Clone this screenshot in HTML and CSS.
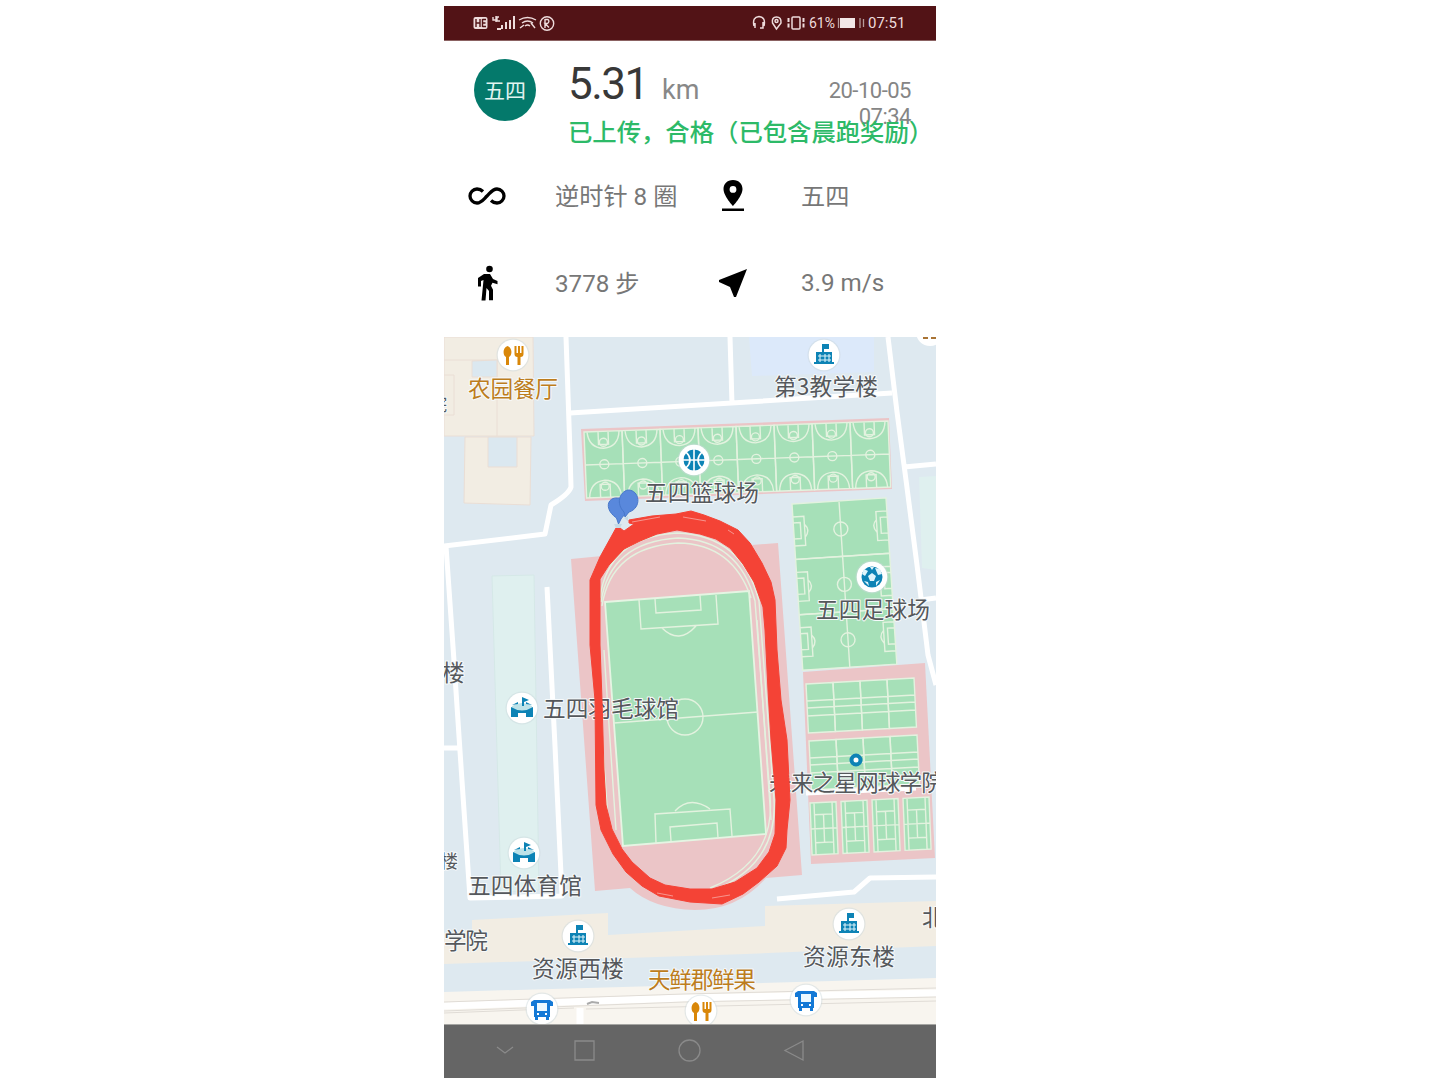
FILE: index.html
```html
<!DOCTYPE html>
<html lang="zh-CN">
<head>
<meta charset="utf-8">
<title>跑步记录</title>
<link rel="stylesheet" href="styles.css">
</head>
<body>
<main class="phone">
  <header class="status">
    <svg class="status-left" width="84" height="18" viewBox="472 14 84 18" fill="none" stroke="#eedcdc" stroke-width="1.4">
      <rect x="473.5" y="17" width="14" height="12" rx="2" fill="#eedcdc" stroke="none"/>
      <path d="M476 19v8M480 19v8M476 23h4M482.5 19v8M482.5 19.500h3.500M482.500 23h3M482.500 26.500h3.500" stroke="#521316"/>
      <path d="M493 17v3h3M496 16v6M499 17h-2v4h3"/>
      <path d="M502 29v-4M506 29v-7M510 29v-9M514 29V16M497 29h4" stroke-width="2"/>
      <path d="M519 20q8.500-5 17 0M522 23q5.500-4 11 0M525 26q2.500-2 5 0M520 28l4-3M531 23l4 5"/>
      <circle cx="547" cy="23.500" r="6.700"/><path d="M545 19v9M545 19.500h3q2 2-.5 4h-2.500l4 4"/>
    </svg>
    <div class="status-right">
      <svg width="54" height="18" viewBox="748 14 54 18" fill="none" stroke="#eedcdc" stroke-width="1.500">
        <path d="M751 26q-2-9 5-9.500q7 .5 5 9.500M752 23v5M760 22v6h-3"/>
        <path d="M773.500 29l-4-6q-1-6 4-6t4.500 6z"/><circle cx="773.500" cy="21" r="1.500"/>
        <rect x="789" y="17" width="8" height="12" rx="1"/><path d="M785.500 18v10M800.500 18v10" stroke-width="2" stroke-dasharray="4 1.500"/>
      </svg>
      <span class="battery-text">61%</span>
      <svg width="28" height="14" viewBox="0 0 28 14"><path d="M1.500 2v10M23 2v10M26.500 3v8" stroke="#b79b9b" stroke-width="1.300"/><path d="M3 2h15v10H3z" fill="#f2e6e6"/></svg>
      <span class="clock">07:51</span>
    </div>
  </header>

  <section class="summary">
    <div class="avatar">五四</div>
    <div class="result">
      <div class="headline">
        <div class="distance"><b>5.31</b><span>km</span></div>
        <time class="date">20-10-05<br>07:34</time>
      </div>
      <p class="state">已上传，合格（已包含晨跑奖励）</p>
    </div>
  </section>

  <section class="metrics">
    <div class="metric"><svg class="wide" viewBox="0 0 38 18"><path d="M15 4.500Q12.500 2 9 2a7 7 0 0 0 0 14c4 0 6-3 10-7s6-7 10-7a7 7 0 0 1 0 14q-3.500 0-6-2.500" fill="none" stroke="#000" stroke-width="3.300"/></svg><span>逆时针 8 圈</span></div>
    <div class="metric"><svg viewBox="0 0 24 32"><path d="M12 0C6 0 2.500 4 2.500 9c0 7 9.500 17 9.500 17s9.500-10 9.500-17c0-5-3.500-9-9.500-9zm0 6a3.400 3.400 0 1 1 0 6.800A3.400 3.400 0 0 1 12 6zM1 28.500h22v2.500H1z" fill-rule="evenodd"/></svg><span>五四</span></div>
    <div class="metric"><svg class="walk" viewBox="0 0 24 36"><circle cx="14.500" cy="4" r="3.300"/><path d="M9 9h6l3 5 4.500 2v3.200l-5-1.500-1.500 3 2 4v10.500h-4V26l-2.500-3-1 12.500H6.500L8.500 15 6 16v5.500H3V13z"/></svg><span>3778 步</span></div>
    <div class="metric"><svg class="arrow" viewBox="0 0 28 28"><path d="M28 0L17 28h-2l-4-10L0 13v-2z"/></svg><span class="latin">3.9 m/s</span></div>
  </section>

  <svg class="map" width="492" height="687" viewBox="444 337 492 687">
    <defs>
      <g id="hoops" class="chalk">
        <path d="M0 0h38v66H0zM0 33h38M3 0q1 16 16 17Q34 16 35 0M3 66q1-16 16-17q15 1 16 17M14 0v13h10V0M14 66V53h10v13"/>
        <circle cx="19" cy="33" r="4.500"/><circle cx="19" cy="11" r="4"/><circle cx="19" cy="55" r="4"/>
      </g>
      <g id="soccer" class="chalk">
        <path d="M0 0h94v55.400H0zM47 0v55.400M0 13h11v29H0M0 19h7v16H0M94 13H83v29h11M94 19h-7v16h7M11 21q6 6 0 13M83 21q-6 6 0 13"/>
        <circle cx="47" cy="28" r="7"/>
      </g>
      <g id="tennis" class="chalk"><path d="M0 0h27v49H0zM0 17h27M0 24h27M0 32h27"/></g>
      <g id="tall-tennis"><path d="M0 0h26v52H0z" fill="#a6e0b8"/><g class="chalk"><path d="M0 0h26v52H0zM4 0v52M22 0v52M4 12h18M4 40h18M13 12v28M0 26h26"/></g></g>
      <g id="pin"><circle r="16.500" fill="#c9d6dc" opacity=".45"/><circle r="15.300" fill="#fff"/></g>
      <g id="school"><use href="#pin"/><path d="M-10 9V7h2V-3h6v-8h7v5h-5v3h8V7h2v2z" fill="#0d83b5"/><path d="M-6 1H7M-6 5H7M-4-1V7M1-1V7M5-1V7" stroke="#d9f1f7" stroke-width="1.100"/></g>
      <g id="stadium"><use href="#pin"/><path d="M-10-2q10-6 20 0v3q-10 5-20 0z" fill="#bde2e8"/><path d="M0-11l7 3-5 2v4H0zM-11-1q11 7 22 0V9H4V5h-8v4h-7zM-10-3l6-3v2zM10-3L4-6v2z" fill="#0d83b5"/></g>
      <g id="food"><use href="#pin"/><path d="M-5.500-9c-5.500 2-4.500 10-1.500 11v8h3V2c3-1 4-9-1.500-11zM1.500-9v8q0 3 3 3v8h3V2q3 0 3-3v-8h-2v7h-1.500v-7h-2v7H3.500v-7z" fill="#d98709"/></g>
      <g id="bus"><use href="#pin"/><path d="M-8-9H8l3 2v4H8V8h-1v3H4V8h-8v3h-3V8h-1V-3h-3v-4z" fill="#1479d6"/><path d="M-5-6H5V2H-5z" fill="#edf9ff"/><path d="M-5 5h2M3 5h2" stroke="#fff" stroke-width="2"/></g>
    </defs>

    <path d="M444 337h492v687H444z" fill="#dee9f0"/>
    <!-- buildings -->
    <g fill="#f2ede3" stroke="#eaded5">
      <path d="M444 337h89l1 99h-90z"/><path d="M465 437h66l-1 68-66-2z"/>
      <path d="M444 360h54M497 360v76M444 375h10v40h-10" fill="none"/>
      <path d="M472 361l25-1v17h-25zM488 437h29v30h-29z" fill="#dbe8f0"/>
      <path d="M444 933l28-2v-11l136-7v22l122-7 35-2V906l171-5v45l-190 8-302 10z" stroke="none"/>
    </g>
    <path d="M749 337h125v35l-122 4z" fill="#dce9fa"/>
    <path d="M492 576l42-1 5 315-38 2z" fill="#dff0ef" stroke="#d5e8e7"/>
    <path d="M919 477l17-1v94l-14-2z" fill="#dff0ef"/>
    <path d="M444 992l492-14v46H444z" fill="#f8f5ef"/>

    <!-- roads -->
    <g fill="none" stroke="#fff" stroke-width="5" stroke-linejoin="round">
      <path d="M566 337l4 115 1 35q-2 7-20 18l-6 29-101 12M570 413l322-20M730 337l2 67M888 337l9 75 9 68 11 85 11 90 8 30M904 467l32-3M920 600l16-2"/>
      <path d="M446 546l8 115 8 120 8 117 92-2-7-150-8-159M444 748h18"/>
      <path d="M777 899l77-7 16-14 66-1"/>
      <path d="M444 1006l240-8 252-5M580 1008v16" stroke-width="7"/>
    </g>
    <path d="M444 1002l240-8 252-6M444 1011l240-9 252-5M444 1013l130-5M586 1009l350-8" fill="none" stroke="#e0dcd6"/>
    <path d="M587 1004l5-2 7 1" fill="none" stroke="#aaa" stroke-width="2"/>

    <!-- basketball courts -->
    <path d="M581 429l308-11 3 71-307 12z" fill="#ebc5c7"/>
    <g transform="matrix(1 -.036 .04 1 584 432)">
      <path d="M0 0h304v66H0z" fill="#a6e0b8"/>
      <use href="#hoops"/><use href="#hoops" x="38"/><use href="#hoops" x="76"/><use href="#hoops" x="114"/><use href="#hoops" x="152"/><use href="#hoops" x="190"/><use href="#hoops" x="228"/><use href="#hoops" x="266"/>
    </g>

    <!-- football pitches -->
    <g transform="matrix(1 -.065 .065 1 792 504)">
      <path d="M0 0h94v166H0z" fill="#a6e0b8"/>
      <use href="#soccer"/><use href="#soccer" y="55.400"/><use href="#soccer" y="110.800"/>
    </g>

    <!-- tennis courts -->
    <path d="M803 672l122-9 10 195-124 6z" fill="#ebc5c7"/>
    <g transform="matrix(1 -.055 .05 1 806 684)"><path d="M0 0h108v49H0z" fill="#a6e0b8"/><use href="#tennis"/><use href="#tennis" x="27"/><use href="#tennis" x="54"/><use href="#tennis" x="81"/></g>
    <g transform="matrix(1 -.055 .05 1 809 741)"><path d="M0 0h108v49H0z" fill="#a6e0b8"/><use href="#tennis"/><use href="#tennis" x="27"/><use href="#tennis" x="54"/><use href="#tennis" x="81"/></g>
    <path d="M806 793l110-5" stroke="#fff" stroke-width="5"/>
    <g transform="matrix(1 -.05 .04 1 810 803)"><use href="#tall-tennis"/><use href="#tall-tennis" x="31"/><use href="#tall-tennis" x="62"/><use href="#tall-tennis" x="93"/></g>

    <!-- running track -->
    <path d="M571 559l31-3q20-29 76-31 54 1 74 20l26-2 24 332-36 3q-28 32-71 32-42-1-65-22l-35 3z" fill="#ebc5c7"/>
    <path d="M605 602l144-11 17 243-143 12z" fill="#a6e0b8" stroke="#e5f5e3" stroke-width="1.800"/>
    <g class="chalk">
      <path d="M614 723l144-11M639 600l2 29 77-5-2-29M655 599l1 14 45-3-1-15M662 628q17 17 34-2"/>
      <circle cx="685" cy="717" r="18"/>
      <path d="M656 843l-1-29 75-5 2 27M671 841l-1-14 47-4 1 15M675 811q15-16 35-2"/>
      <path d="M600 598q8-61 77-65 65 2 82 68l15 198q4 66-62 92"/>
      <path d="M601 602q9-60 77-64 61 2 77 63l15 195q6 65-60 92"/>
      <path d="M602 606q9-59 76-63 55 1 73 55M597 600l4 120 7 100 12 28M604 650l12 180M757 620l14 200"/>
    </g>

    <!-- place labels below the route -->
    <g class="label">
      <text x="543" y="717" textLength="136">五四羽毛球馆</text>
      <text x="769" y="791" textLength="175">未来之星网球学院</text>
    </g>

    <!-- recorded route -->
    <path fill="#f44336" stroke="#f44336" stroke-linejoin="round" fill-rule="evenodd" d="M616 528L620 528 624 531 634 524 629 523 629 520 652 516 676 514 691 511 704 515 720 521 738 530 750 543 762 563 771 582 775 600 777 650 781 700 787 740 790 800 787 830 786 848 777 866 759 882 743 894 722 904 690 902 659 896 642 886 626 872 613 854 601 830 596 805 595 700 590 645 590 580 600 557ZM640 541L624 549 609 565 600 579 600 645 602 700 604 770 606 805 612 829 622 849 632 862 650 878 665 885 690 889 712 889 735 882 757 868 769 852 775 834 776 800 771 740 768 690 765 630 763 607 754 582 743 564 730 548 716 539 700 534 677 530 657 534Z"/>
    <path d="M632 522l28-5M683 517l23 4M728 530l6 4M657 893l16 3M712 898l18-3" fill="none" stroke="#f7aaa4" stroke-width=".8"/>
    <path d="M614 524h8l-2 4h-4zM624 518l4-2v5z" fill="#c6dbe6"/>
    <path d="M618.500 524l-2-6c-13-9-9-21 1-20 11 0 15 11 4 20z" fill="#5988dc" stroke="#4777ca"/>
    <path d="M625 517l-1-5c-8-8-5-20 4-22 12 0 14 18 1 22z" fill="#5988dc" stroke="#4777ca"/>

    <!-- places -->
    <use href="#food" x="513" y="355"/><use href="#school" x="824" y="355"/>
    <use href="#pin" x="694" y="460"/>
    <circle cx="694" cy="460" r="10.500" fill="#0d83b5"/><path d="M683 460h22M694 449v22M686 452q8 8 0 16M702 452q-8 8 0 16" fill="none" stroke="#fff" stroke-width="1.600"/>
    <use href="#pin" x="872" y="577"/>
    <circle cx="872" cy="577" r="10.500" fill="#0d83b5"/><path d="M872 573l4 3-2 5h-4l-2-5zM864 569l4 2-3 5-3-2zM875 568l5 1 2 5-4 1zM864 581l4 1 1 4zM880 580l-4 2v4zM870 567h4l-2 3z" fill="#dff5fc"/>
    <use href="#stadium" x="522" y="708"/><use href="#stadium" x="524" y="853"/>
    <use href="#school" x="578" y="936"/><use href="#school" x="849" y="924"/>
    <use href="#bus" x="542" y="1009"/><use href="#bus" x="806" y="1000"/><use href="#food" x="701" y="1011"/>
    <circle cx="856" cy="760" r="4.500" fill="#fff" stroke="#0d83b5" stroke-width="4"/>
    <circle cx="930" cy="332" r="14" fill="#fff"/><path d="M923 338h5M931 338h5" stroke="#a97435" stroke-width="2"/>
    <g class="label food">
      <text x="468" y="397" textLength="90">农园餐厅</text>
      <text x="648" y="988" textLength="108">天鲜郡鲜果</text>
    </g>
    <g class="label">
      <text x="774" y="395" textLength="104">第3教学楼</text>
      <text x="645" y="501" textLength="114">五四篮球场</text>
      <text x="816" y="618" textLength="114">五四足球场</text>
      <text x="442" y="681">楼</text>
      <text x="440" y="868" class="small">楼</text>
      <text x="429" y="411" class="small">院</text>
      <text x="468" y="894" textLength="114">五四体育馆</text>
      <text x="444" y="949" textLength="44">学院</text>
      <text x="532" y="977" textLength="92">资源西楼</text>
      <text x="803" y="965" textLength="92">资源东楼</text>
      <text x="922" y="926">北</text>
    </g>
  </svg>

  <nav class="navigation">
    <svg width="492" height="54" viewBox="444 1024 492 54" fill="none" stroke="#8a8a8a" stroke-width="1.300">
      <path d="M497 1047l8 6 8-6M575 1041h19v19h-19zM803 1041v19l-18-9.500z"/><circle cx="689.500" cy="1050.500" r="10.500"/>
    </svg>
  </nav>
</main>
</body>
</html>
```
FILE: styles.css
```css
* { box-sizing: border-box; }
body { margin: 0; background: #fff; font-family: Roboto, "Noto Sans CJK SC", sans-serif; }
.phone { width: 492px; height: 1072px; margin: 6px 0 0 444px; display: flex; flex-direction: column; overflow: hidden; }
.status { height: 35px; flex: none; background: #521316; border-bottom: 1px solid #8b6262; display: flex; align-items: center; justify-content: space-between; padding: 0 30px 0 28px; color: #eedcdc; font-size: 15px; }
.status-right { display: flex; align-items: center; }
.battery-text { width: 32px; padding-left: 4px; font-size: 14px; }
.clock { width: 38px; margin-left: 3px; white-space: nowrap; }
.summary { height: 111px; flex: none; display: flex; padding: 18px 0 0 30px; }
.avatar { width: 62px; height: 62px; flex: none; border-radius: 50%; background: #04796b; color: #e1f4f0; font-size: 21px; display: grid; place-items: center; padding-bottom: 2px; }
.result { width: 368px; flex: none; margin-left: 32px; }
.headline { height: 56px; display: flex; justify-content: space-between; padding-right: 25px; }
.distance { display: flex; align-items: baseline; height: 50px; line-height: 50px; }
.distance b { font-size: 44px; font-weight: 400; letter-spacing: -1.5px; color: #383838; width: 94px; }
.distance span { font-size: 27px; color: #888; }
.date { font-size: 22px; line-height: 26px; text-align: right; color: #858585; padding-top: 19px; letter-spacing: -.5px; }
.state { margin: 0; color: #2dba68; font-size: 24.4px; line-height: 36px; font-weight: 500; white-space: nowrap; letter-spacing: -.05px; }
.metrics { height: 185px; flex: none; display: grid; grid-template-columns: 246px 246px; grid-template-rows: 87px 87px; }
.metric { display: grid; grid-template-columns: 86px 1fr; align-items: center; color: #777; font-size: 24.2px; white-space: nowrap; }
.metric svg { width: 24px; height: 32px; justify-self: center; }
.metric .wide { width: 38px; height: 18px; }
.metric .walk { height: 36px; }
.metric .arrow { width: 28px; height: 28px; }
.metric span { padding: 0 0 2px 25px; }
.metric .latin { padding-bottom: 0; }
.map { display: block; flex: none; }
.chalk { fill: none; stroke: #e3f2df; stroke-width: 1.4; }
.label { font-family: "Noto Sans CJK SC", sans-serif; font-size: 22.7px; fill: #55585c; stroke: #f7fafb; stroke-width: 2px; paint-order: stroke; stroke-linejoin: round; }
.food { fill: #bd7d1d; }
.small { font-size: 18px; }
.navigation { height: 54px; flex: none; background: #656565; border-top: 1px solid #a5a5a2; overflow: hidden; }
.navigation svg { display: block; margin-top: -1px; }
```
